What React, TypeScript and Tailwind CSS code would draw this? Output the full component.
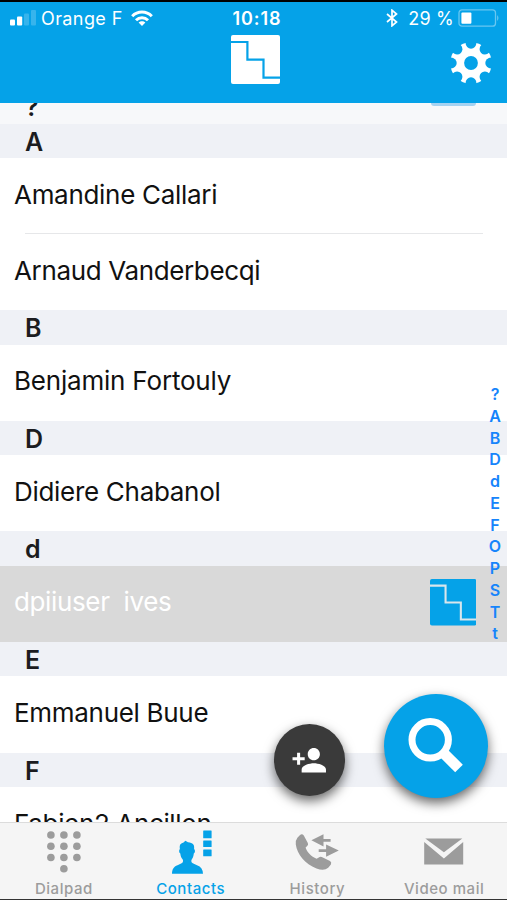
import React from 'react';
import { MdPersonAdd } from 'react-icons/md';

const sections = [
  {
    letter: 'A',
    contacts: [
      { name: 'Amandine Callari', tracking: 'tracking-[-0.3px]' },
      { name: 'Arnaud Vanderbecqi', tracking: 'tracking-[-0.36px]' },
    ],
  },
  { letter: 'B', contacts: [{ name: 'Benjamin Fortouly', tracking: 'tracking-[-0.2px]' }] },
  { letter: 'D', contacts: [{ name: 'Didiere Chabanol', tracking: 'tracking-[-0.3px]' }] },
  { letter: 'd', contacts: [{ name: 'dpiiuser  ives', tracking: 'tracking-[-0.36px]', selected: true }] },
  { letter: 'E', contacts: [{ name: 'Emmanuel Buue', tracking: 'tracking-[-0.3px]' }] },
  { letter: 'F', contacts: [{ name: 'Fabien2 Ancillon', tracking: 'tracking-[-0.36px]' }] },
];

const indexLetters = ['?', 'A', 'B', 'D', 'd', 'E', 'F', 'O', 'P', 'S', 'T', 't'];

function Logo({ className, line }: { className: string; line: string }) {
  return (
    <svg viewBox="0 0 49 49" className={className}>
      <rect width="49" height="49" rx="2" fill="currentColor" />
      <path d="M0 7H16.4V24.7H32.5V42.7H49" fill="none" stroke={line} strokeWidth="2.2" />
    </svg>
  );
}

function Gear() {
  return (
    <svg viewBox="-21 -21 42 42" className="size-[42px]">
      <mask id="gear">
        <circle r="20.8" fill="#fff" />
        <circle r="6.9" fill="#000" />
        {[0, 45, 90, 135, 180, 225, 270, 315].map(a => (
          <ellipse key={a} cx="0" cy="-20" rx="5.4" ry="5.7" fill="#000" transform={`rotate(${a})`} />
        ))}
      </mask>
      <rect x="-21" y="-21" width="42" height="42" fill="#fff" mask="url(#gear)" />
    </svg>
  );
}

function StatusBar() {
  return (
    <div className="grid grid-cols-3 h-[32px] items-center text-[18px] leading-none">
      <div className="flex items-center pl-[10px] whitespace-nowrap">
        <svg viewBox="0 0 26 16" className="w-[26px] h-4 shrink-0" fill="#fff">
          <rect x="0" y="9.6" width="5" height="6" rx="1" />
          <rect x="7" y="6.4" width="5.2" height="9.2" rx="1" />
          <rect x="14" y="3.4" width="5" height="12.2" rx="1" opacity=".2" />
          <rect x="21" y="0" width="5" height="15.6" rx="1" opacity=".2" />
        </svg>
        <span className="ml-[5px] mt-px tracking-[0.4px]">Orange F</span>
        <svg viewBox="0 0 22 16" className="ml-2 w-[22px] h-4 shrink-0" fill="none" stroke="#fff" strokeWidth="3">
          <path d="M1.2 6.2C6.7.6 15.3.6 20.8 6.2" />
          <path d="M5 10.2C8.4 6.8 13.6 6.8 17 10.2" />
          <path d="M7.6 12.6C9.5 10.8 12.5 10.8 14.4 12.6L11 16Z" fill="#fff" stroke="none" />
        </svg>
      </div>
      <div className="text-center font-semibold tracking-[0.9px] pl-[7px] mt-px">10:18</div>
      <div className="flex items-center justify-end pr-[7px] whitespace-nowrap">
        <svg viewBox="0 0 12 18" className="w-3 h-[18px]" fill="none" stroke="#fff" strokeWidth="1.7">
          <path d="M1 5L10.5 13L6 16.8V1.2L10.5 5L1 13" />
        </svg>
        <span className="ml-[10px] mt-px tracking-[0.2px]">29 %</span>
        <svg viewBox="0 0 42 18" className="ml-1 w-[42px] h-[18px]">
          <rect x="1" y=".8" width="36.5" height="16.4" rx="3" fill="none" stroke="#fff" strokeOpacity=".4" strokeWidth="1.3" />
          <rect x="3.4" y="3.4" width="10" height="11.3" rx="1" fill="#fff" />
          <path d="M39.3 6V12Q41.5 9 39.3 6Z" fill="#fff" opacity=".5" />
        </svg>
      </div>
    </div>
  );
}

function DialpadIcon() {
  const dots = [[17.9, 9], [30.9, 9], [43.9, 9], [17.9, 20.3], [30.9, 20.3], [43.9, 20.3], [17.9, 31.5], [30.9, 31.5], [43.9, 31.5], [30.9, 42.7]];
  return (
    <svg viewBox="0 0 60 48" className="w-[60px] h-12" fill="currentColor">
      {dots.map(([x, y]) => <circle key={`${x}-${y}`} cx={x} cy={y} r="3.8" />)}
    </svg>
  );
}

function ContactsIcon() {
  return (
    <svg viewBox="0 0 60 48" className="w-[60px] h-12" fill="currentColor">
      <path d="M12 47.8C12 43.5 13.6 40.6 17.5 39.2L21.6 37.3C23.4 36.4 23.4 34 22.4 33C21.2 31.8 20.6 30 20.3 27.6C18.9 27 18.7 23.8 19.9 23C19.3 19 20.4 17.4 23.2 16.8L25.4 14.8L28 16.3C33 16.8 34.6 18.6 34.1 23C35.5 24 35.1 27 33.8 27.6C33.6 30 32.9 31.9 32 33C31 34 31 36.4 32.8 37.3L37 39.2C41 40.6 43 43.5 43 47.8Z" />
      <rect x="43.2" y="4.4" width="8.4" height="7.9" rx=".5" />
      <rect x="43.2" y="14.6" width="8.4" height="6.4" rx=".5" />
      <rect x="43.2" y="23.4" width="8.4" height="6.8" rx=".5" />
    </svg>
  );
}

function HistoryIcon() {
  return (
    <svg viewBox="0 0 60 48" className="w-[60px] h-12" fill="currentColor">
      <path d="M10.4 11.8L12.8 9.2Q15 7.4 16.8 9.5L20.8 17Q21.6 18.5 20.4 19.7L18.6 21.6C20 26.2 24.2 30.6 29.6 32.8L31.8 31.4Q33.2 30.4 34.8 31.1L43 35Q45 36.4 43.9 38.4L41.2 41.8Q37 45.4 29.5 42.4C18 37.8 10.2 28.5 8.8 18.5Q8.4 14.2 10.4 11.8Z" />
      <path d="M24.4 14.3L36.5 8.3V13H43.6V15.8H36.5V20.4Z" />
      <path d="M51.8 24.5L39.1 18.5V23.2H31.7V26H39.1V30.7Z" />
    </svg>
  );
}

function MailIcon() {
  return (
    <svg viewBox="0 0 60 48" className="w-[60px] h-12" fill="currentColor">
      <path d="M11.3 12.6H48.3L29.9 26.2Z" />
      <path d="M10.2 16L29.9 32.6L49.2 16V38.6H10.2Z" />
    </svg>
  );
}

const tabs = [
  { label: 'Dialpad', icon: DialpadIcon },
  { label: 'Contacts', icon: ContactsIcon, active: true },
  { label: 'History', icon: HistoryIcon },
  { label: 'Video mail', icon: MailIcon },
];

export default function App() {
  return (
    <div className="relative flex flex-col w-[507px] h-[900px] overflow-hidden bg-white font-['Inter','Liberation_Sans',sans-serif]">
      <header className="h-[102.5px] shrink-0 bg-[#05a2e8] border-t-2 border-black text-white">
        <StatusBar />
        <div className="grid grid-cols-3 pt-px">
          <div />
          <Logo className="size-[49px] justify-self-center ml-1" line="#05a2e8" />
          <div className="flex justify-end items-center pr-[15.5px] pt-[7px]">
            <Gear />
          </div>
        </div>
      </header>

      <main className="flex-1 min-h-0 overflow-hidden">
        {/* Tail of the "?" section, scrolled under the header */}
        <div className="h-[21px] bg-[#f7f8fa] flex justify-between overflow-hidden">
          <span className="pl-[25px] -mt-[11px] text-[25px] leading-[30px] font-semibold text-[#1b1c20]">?</span>
          <div className="w-[45px] h-[3px] mr-[31px] rounded-b bg-[#a5d2f1]" />
        </div>

        {sections.map(section => (
          <section key={section.letter}>
            <h2 className="h-[34.5px] pl-[25px] bg-[#eff1f6] text-[25px] leading-[36px] font-semibold text-[#1b1c20]">{section.letter}</h2>
            {section.contacts.map((contact, i) => (
              <div
                key={contact.name}
                className={`relative flex items-center justify-between h-[76.1px] pl-[14px] pr-[31px] ${contact.selected ? 'bg-[#d9d9d9] text-white' : 'text-[#111]'}`}
              >
                <span className={`text-[26px] leading-none whitespace-pre pb-[3px] ${contact.tracking}`}>{contact.name}</span>
                {contact.selected && <Logo className="size-[46.5px] mb-[3px] text-[#05a2e8]" line="#d9e6ec" />}
                {i < section.contacts.length - 1 && <div className="absolute bottom-0 left-[25px] right-6 h-px bg-[#e6e7e9]" />}
              </div>
            ))}
          </section>
        ))}
      </main>

      <ul className="absolute right-0 top-[383px] w-6 text-center text-[16px] font-semibold text-[#1684fb]">
        {indexLetters.map(l => (
          <li key={l} className="h-[21.75px] leading-[22px]">{l}</li>
        ))}
      </ul>

      <button className="absolute left-[273.5px] top-[724px] size-[71.5px] rounded-full bg-[#3a3a3a] text-white flex items-center justify-center shadow-[0_5px_12px_rgba(0,0,0,0.6)]">
        <MdPersonAdd size={36.5} />
      </button>
      <button className="absolute left-[383.5px] top-[693.5px] size-[104px] rounded-full bg-[#05a2e8] shadow-[0_5px_12px_rgba(0,0,0,0.6)]">
        <svg viewBox="0 0 104 104" className="size-full" fill="none" stroke="#fff">
          <circle cx="46.2" cy="45.8" r="18.2" strokeWidth="7" />
          <path d="M58 57.5L62 61.5" strokeWidth="7" />
          <path d="M60.5 60L75 74.5" strokeWidth="10.8" />
        </svg>
      </button>

      <nav className="relative grid grid-cols-4 h-[78px] shrink-0 bg-[#f5f5f5] border-t border-t-[#dcdcdc] border-b border-b-[#333]">
        {tabs.map(({ label, icon: Icon, active }) => (
          <a key={label} className={`flex flex-col items-center pt-[3px] ${active ? 'text-[#05a2e8]' : 'text-[#9c9c9c]'}`}>
            <Icon />
            <span className="mt-[6px] pl-px text-[15px] leading-[18px] font-medium tracking-[0.55px] whitespace-nowrap">{label}</span>
          </a>
        ))}
      </nav>
    </div>
  );
}
